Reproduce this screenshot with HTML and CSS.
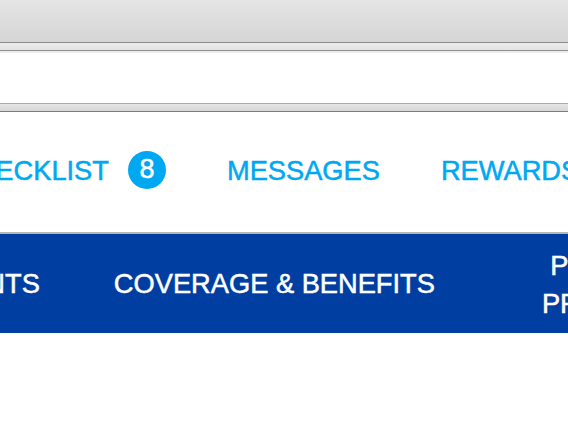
FILE: index.html
```html
<!DOCTYPE html>
<html>
<head>
<meta charset="utf-8">
<link rel="stylesheet" href="styles.css">
</head>
<body>
<div class="chrome">
  <div class="toolbar"></div>
  <div class="tabbar"></div>
</div>
<div class="blank"></div>
<div class="chrome2"></div>
<nav class="utility">
  <a class="util-item">CHECKLIST <span class="badge">8</span></a>
  <a class="util-item">MESSAGES</a>
  <a class="util-item">REWARDS</a>
</nav>
<nav class="mainnav">
  <a class="main-item">PAYMENTS</a>
  <a class="main-item">COVERAGE &amp; BENEFITS</a>
  <a class="main-item two">PROVIDER<br>PROGRAMS</a>
</nav>
</body>
</html>
```

FILE: styles.css
```css
html, body {
  margin: 0;
  padding: 0;
  background: #fff;
  overflow: hidden;
  width: 568px;
  height: 424px;
  font-family: "Liberation Sans", Arial, Helvetica, sans-serif;
}

.toolbar {
  height: 42px;
  background: linear-gradient(#e5e5e5, #d5d5d5);
  border-bottom: 1px solid #8c8c8c;
}

.tabbar {
  height: 7px;
  background: linear-gradient(#ececec, #e3e3e3);
  border-bottom: 1px solid #8f8f8f;
  box-shadow: 0 2px 0 #ececec;
}

.blank {
  height: 50px;
  margin-top: 2px;
  background: #fff;
}

.chrome2 {
  height: 7px;
  background: linear-gradient(#e6e6e6, #d6d6d6);
  border-top: 1px solid #a9a9a9;
  border-bottom: 1px solid #7c7c7c;
}

.utility {
  display: flex;
  align-items: center;
  height: 118px;
  padding-bottom: 2px;
  margin-left: -44px;
  gap: 61px;
  border-bottom: 2px solid #b5b5b5;
  white-space: nowrap;
}

.util-item {
  display: flex;
  align-items: center;
  gap: 19px;
  color: #00a8f2;
  font-size: 27.25px;
  text-decoration: none;
  -webkit-text-stroke: 0.5px currentColor;
}

.badge {
  display: inline-flex;
  align-items: center;
  justify-content: center;
  width: 38px;
  height: 38px;
  border-radius: 50%;
  background: #00a8f2;
  color: #fff;
  font-size: 27px;
  margin-top: -3px;
}

.mainnav {
  display: flex;
  align-items: center;
  height: 98px;
  padding-top: 1px;
  background: #003fa1;
  margin-left: -106px;
  gap: 74px;
  white-space: nowrap;
}

.main-item {
  color: #fff;
  font-size: 27.25px;
  text-decoration: none;
  -webkit-text-stroke: 0.5px currentColor;
}

.main-item.two {
  margin-left: 33px;
  text-align: center;
  line-height: 38px;
  padding-top: 1px;
}
```
